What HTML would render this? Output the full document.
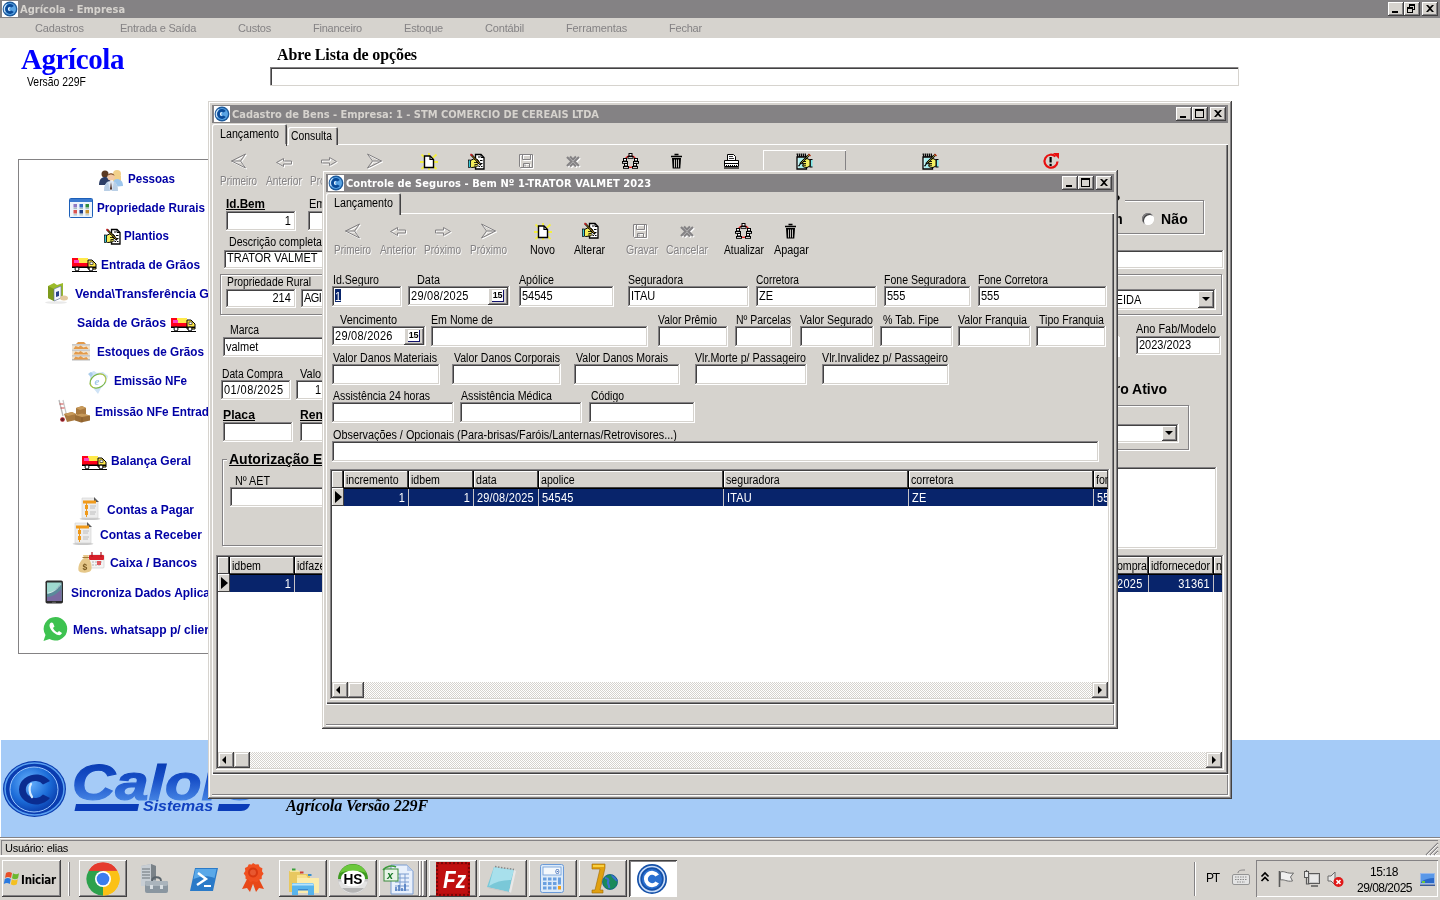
<!DOCTYPE html>
<html lang="pt-BR"><head><meta charset="utf-8"><title>Agrícola - Empresa</title>
<style>
*{box-sizing:border-box;margin:0;padding:0}
html,body{width:1440px;height:900px;overflow:hidden;background:#fff}
body{position:relative;font:11px "Liberation Sans",sans-serif;color:#000;-webkit-font-smoothing:none}
.a{position:absolute;white-space:pre}
.t{position:absolute;white-space:pre;line-height:13px;height:13px;font-size:12.5px;transform-origin:0 50%;transform:scaleX(.88)}
.s{display:inline-block;font-size:12.5px;transform-origin:0 50%;transform:scaleX(.88);white-space:pre}
.r>.s{transform-origin:100% 50%}
.tb{font:bold 11px "DejaVu Sans Condensed","Liberation Sans",sans-serif;color:#d6d3ce}
.face{background:#d6d3ce}
.win{position:absolute;background:#d6d3ce;box-shadow:inset -1px -1px #424142,inset 1px 1px #d6d3ce,inset -2px -2px #848284,inset 2px 2px #fff}
.cap{position:absolute;background:#848284}
.cbtn{position:absolute;width:16px;height:14px;background:#d6d3ce;box-shadow:inset -1px -1px #424142,inset 1px 1px #fff,inset -2px -2px #848284}
.ed{position:absolute;background:#fff;box-shadow:inset -1px -1px #fff,inset 1px 1px #848284,inset -2px -2px #d6d3ce,inset 2px 2px #424142;white-space:pre;line-height:13px;padding:4px 3px 0 3px;overflow:hidden}
.ed.r{text-align:right;padding-right:5px}
.btn{position:absolute;background:#d6d3ce;box-shadow:inset -1px -1px #424142,inset 1px 1px #fff,inset -2px -2px #848284}
.grp{position:absolute;border:1px solid #848284;box-shadow:inset 1px 1px #fff,1px 1px #fff}
.dis{color:#848284;text-shadow:1px 1px #fff}
.lm{position:absolute;white-space:pre;font:bold 12px "Liberation Sans",sans-serif;color:#0000a5;line-height:14px;letter-spacing:.35px}
.hc{position:absolute;background:#d6d3ce;box-shadow:inset -1px -1px #424142,inset 1px 1px #fff;white-space:pre;line-height:13px;padding:3px 0 0 2px;overflow:hidden;height:17px}
.hc .s{transform:scaleX(.85)}
.sc .s{letter-spacing:.2px}
.sc{position:absolute;background:#08246b;color:#fff;white-space:pre;line-height:13px;padding:3px 0 0 3px;overflow:hidden;height:17px;border-right:1px solid #c6c3c6}
.sc.r{text-align:right;padding-right:3px}
.sbar{position:absolute;height:16px;background-color:#e9e7e3;background-image:conic-gradient(#fff 25%,#d6d3ce 0 50%,#fff 0 75%,#d6d3ce 0);background-size:2px 2px}
.sbtn{position:absolute;width:16px;height:16px;background:#d6d3ce;box-shadow:inset -1px -1px #424142,inset 1px 1px #d6d3ce,inset -2px -2px #848284,inset 2px 2px #fff}
svg{position:absolute;overflow:visible}
</style></head>
<body>
<div id="root" style="position:absolute;left:0;top:0;width:1440px;height:900px;will-change:transform">
<div class="a" style="left:0px;top:0px;width:1440px;height:18px;background:#848284;"></div>
<svg style="left:2px;top:1px" width="16" height="16" viewBox="0 0 16 16"><rect x="0" y="0" width="16" height="16" fill="#fff"/><circle cx="8" cy="8" r="7.400" fill="#1c5a9c"/><circle cx="8" cy="8" r="6" fill="#5aa4e4"/><path d="M3.200 11.300a5.800 5.800 0 0 1 1.300-8a6.800 6.800 0 0 0-1.300 8z" fill="#e8f4ff" stroke="#e8f4ff" stroke-width=".7"/><path d="M11.86 4.98A4.9 4.9 0 1 0 11.86 11.02L9.46 9.51A2.1 2.1 0 1 1 9.46 6.49Z" fill="#0a4a98"/><path d="M7.200 6.700c-.9.800-.9 1.900 0 2.700" stroke="#e8f4ff" stroke-width="1.200" fill="none" stroke-linecap="round"/></svg>
<div class="t tb" style="left:20px;top:3px;;transform:none">Agrícola - Empresa</div>
<div class="cbtn" style="left:1388px;top:2px"><div class="a" style="left:4px;top:9px;width:6px;height:2px;background:#000"></div></div><div class="cbtn" style="left:1404px;top:2px"><div class="a" style="left:5px;top:2px;width:6px;height:6px;border:1px solid #000;border-top-width:2px"></div><div class="a" style="left:3px;top:5px;width:6px;height:6px;border:1px solid #000;border-top-width:2px;background:#d6d3ce"></div></div><div class="cbtn" style="left:1422px;top:2px"><svg style="left:4px;top:3px" width="8" height="7" viewBox="0 0 8 7"><path d="M0 0h2l2 2 2-2h2L5 3.5 8 7H6L4 5 2 7H0l3-3.5z" fill="#000"/></svg></div>
<div class="a" style="left:0px;top:18px;width:1440px;height:20px;background:#d6d3ce;"></div>
<div class="t " style="left:35px;top:22px;font:11px 'Liberation Sans',sans-serif;color:#848284;letter-spacing:-0.13px;transform:none">Cadastros</div>
<div class="t " style="left:120px;top:22px;font:11px 'Liberation Sans',sans-serif;color:#848284;letter-spacing:-0.23px;transform:none">Entrada e Saída</div>
<div class="t " style="left:238px;top:22px;font:11px 'Liberation Sans',sans-serif;color:#848284;letter-spacing:-0.21px;transform:none">Custos</div>
<div class="t " style="left:313px;top:22px;font:11px 'Liberation Sans',sans-serif;color:#848284;letter-spacing:-0.24px;transform:none">Financeiro</div>
<div class="t " style="left:404px;top:22px;font:11px 'Liberation Sans',sans-serif;color:#848284;letter-spacing:-0.20px;transform:none">Estoque</div>
<div class="t " style="left:485px;top:22px;font:11px 'Liberation Sans',sans-serif;color:#848284;letter-spacing:-0.17px;transform:none">Contábil</div>
<div class="t " style="left:566px;top:22px;font:11px 'Liberation Sans',sans-serif;color:#848284;letter-spacing:-0.12px;transform:none">Ferramentas</div>
<div class="t " style="left:669px;top:22px;font:11px 'Liberation Sans',sans-serif;color:#848284;letter-spacing:-0.21px;transform:none">Fechar</div>
<div class="a" style="left:0px;top:38px;width:1440px;height:702px;background:#ffffff;"></div>
<div class="a" style="left:0px;top:740px;width:1440px;height:97px;background:#a5cbf7;"></div>
<div class="a" style="left:0px;top:740px;width:1px;height:97px;background:#fff;"></div>
<div class="a" style="left:0px;top:837px;width:1440px;height:20px;background:#d6d3ce;"></div>
<div class="a" style="left:0px;top:837px;width:1440px;height:1px;background:#848284;"></div>
<div class="a" style="left:0px;top:838px;width:1440px;height:1px;background:#fff;"></div>
<div class="a" style="left:1px;top:840px;width:1437px;height:1px;background:#848284;"></div>
<div class="a" style="left:1px;top:840px;width:1px;height:15px;background:#848284;"></div>
<div class="t " style="left:5px;top:842px;font:11px 'Liberation Sans',sans-serif;letter-spacing:-0.26px;transform:none">Usuário: elias</div>
<div class="a" style="left:0px;top:855px;width:1440px;height:1px;background:#fff;"></div>
<div class="a" style="left:0px;top:856px;width:1440px;height:44px;background:#d6d3ce;"></div>
<div class="a" style="left:0px;top:856px;width:1440px;height:1px;background:#fff;"></div>
<div class="t " style="left:21px;top:44px;font:bold 29px 'Liberation Serif',serif;color:#0000ff;line-height:30px;height:30px;letter-spacing:-0.41px;transform:none">Agrícola</div>
<div class="t " style="left:27px;top:76px;;transform:scaleX(0.832)">Versão 229F</div>
<div class="t " style="left:277px;top:46px;font:bold 16px 'Liberation Serif',serif;line-height:18px;height:18px;letter-spacing:-0.12px;transform:none">Abre Lista de opções</div>
<div class="a" style="left:270px;top:67px;width:969px;height:19px;background:#fff;box-shadow:inset -1px -1px #d6d3ce,inset 1px 1px #848284,inset 2px 2px #424142"></div>
<div class="a" style="left:18px;top:159px;width:300px;height:495px;border:1px solid #848284;background:#fff"></div>
<svg style="left:99px;top:168px" width="25" height="23" viewBox="0 0 25 23"><circle cx="6" cy="6" r="3.5" fill="#5a3a22"/><path d="M0 17c0-6 3-8 6-8s6 2 6 8z" fill="#2c3e66"/><circle cx="18" cy="6" r="4" fill="#f1d08a"/><path d="M14 8c0 5 0 7-1 9h10c-1-2-1-4-1-9z" fill="#f1d08a"/><path d="M13 19c0-5 2-8 5-8s6 2 6 7z" fill="#9cc6ec"/><circle cx="12" cy="9" r="3.6" fill="#f3c9a5"/><path d="M8.5 8a3.6 3.6 0 0 1 7 0c-2-2-5-2-7 0z" fill="#7a4a22"/><path d="M5 23c0-7 3-10 7-10s7 3 7 10z" fill="#dfe9f5"/><path d="M12 14l-1 7 1 1 1-1z" fill="#4a2b20"/><path d="M5 23c0-5 1.5-8 4-9.5l2 9.500z M19 23c0-5-1.500-8-4-9.500l-2 9.500z" fill="#b9cfe6"/></svg>
<svg style="left:69px;top:198px" width="24" height="20" viewBox="0 0 24 20"><rect x=".5" y=".5" width="23" height="19" rx="1" fill="#eef4fb" stroke="#1c5fb8"/><rect x="1" y="1" width="22" height="3" fill="#3b7bd0"/><rect x="4.5" y="6" width="3.5" height="3.5" fill="#8e7cc3"/><rect x="4.5" y="12" width="3.5" height="3.5" fill="#d9534f"/><rect x="4.5" y="16.500" width="3.5" height=".8" fill="#8aa"/><rect x="4.5" y="10.300" width="3.5" height=".8" fill="#8aa"/><rect x="10.5" y="6" width="3.5" height="3.5" fill="#2e6bc6"/><rect x="10.5" y="12" width="3.5" height="3.5" fill="#1b3f8b"/><rect x="10.5" y="16.500" width="3.5" height=".8" fill="#8aa"/><rect x="10.5" y="10.300" width="3.5" height=".8" fill="#8aa"/><rect x="16.5" y="6" width="3.5" height="3.5" fill="#2e8b3e"/><rect x="16.5" y="12" width="3.5" height="3.5" fill="#c7922e"/><rect x="16.5" y="16.500" width="3.5" height=".8" fill="#8aa"/><rect x="16.5" y="10.300" width="3.5" height=".8" fill="#8aa"/></svg>
<svg style="left:104px;top:228px" width="17" height="17" viewBox="0 0 17 17"><path d="M7.500 1.500h5.500l3 3v11.500h-8.500z" fill="#fff" stroke="#000" stroke-width="1.300"/><path d="M13 1.500v3h3" fill="none" stroke="#000" stroke-width="1"/><path d="M10 4h2M12 7.500h2.500M10 10.500h1.500M13 10.500h1.500M10.500 13.500h1.500M13 13.500h1.500" stroke="#000" stroke-width="1"/><path d="M2.500 7.500l3-1.500 4 .5 1.500 2-2.500.5 2 1-1.500 1.500 1 1-1.500 1.500-5 .5-1.500-1.500z" fill="#f4ee5a" stroke="#000" stroke-width="1"/><path d="M6 9.500h3M6.500 11.500h3M6 13h2.500" stroke="#000" stroke-width=".8"/><rect x=".5" y="7" width="2" height="7.500" fill="#38c8d8" stroke="#000" stroke-width=".7"/><path d="M3 1.500l10 10.500" stroke="#000" stroke-width="2"/><path d="M2.500 1l2 2" stroke="#d02020" stroke-width="1.500"/><path d="M4.500 3l7.500 8" stroke="#c8a020" stroke-width=".8"/></svg>
<svg style="left:72px;top:257px" width="25" height="15" viewBox="0 0 25 15"><rect x="0" y="1" width="16" height="9" fill="#ff0018"/><rect x="6" y="1" width="10" height="5" fill="#ffe94a"/><rect x="2" y="3" width="5" height="3" fill="#ff40c0"/><path d="M16 3h4l4 4v5h-8z" fill="#ffe94a" stroke="#000" stroke-width="1"/><rect x="0" y="9.5" width="24" height="1.5" fill="#000"/><circle cx="5" cy="12" r="2" fill="#fff" stroke="#000"/><circle cx="19" cy="12" r="2" fill="#fff" stroke="#000"/><rect x="0" y="14" width="25" height="1" fill="#000"/><rect x="18" y="5" width="3" height="2.5" fill="#fff" stroke="#000" stroke-width=".6"/></svg>
<svg style="left:45px;top:281px" width="24" height="24" viewBox="0 0 24 24"><ellipse cx="11" cy="21.500" rx="11" ry="1.300" fill="#e9e9e9"/><path d="M3 5l6-3 3 2 6-2v14l-9 4-6-3z" fill="#9bbb2a"/><path d="M3 5l6 3v12l-6-3z" fill="#7d9a1c"/><path d="M9 8l7-3v12l-7 3z" fill="#f4f6fb" stroke="#5a6aa8" stroke-width=".6"/><path d="M11 11l3-1v5l-3 1z" fill="#27408b"/><ellipse cx="19" cy="17" rx="4" ry="2.500" fill="#e3c9a0"/></svg>
<svg style="left:171px;top:317px" width="25" height="15" viewBox="0 0 25 15"><rect x="0" y="1" width="16" height="9" fill="#ff0018"/><rect x="6" y="1" width="10" height="5" fill="#ffe94a"/><rect x="2" y="3" width="5" height="3" fill="#ff40c0"/><path d="M16 3h4l4 4v5h-8z" fill="#ffe94a" stroke="#000" stroke-width="1"/><rect x="0" y="9.5" width="24" height="1.5" fill="#000"/><circle cx="5" cy="12" r="2" fill="#fff" stroke="#000"/><circle cx="19" cy="12" r="2" fill="#fff" stroke="#000"/><rect x="0" y="14" width="25" height="1" fill="#000"/><rect x="18" y="5" width="3" height="2.5" fill="#fff" stroke="#000" stroke-width=".6"/></svg>
<svg style="left:72px;top:342px" width="18" height="19" viewBox="0 0 18 19"><rect x="0" y="2" width="18" height="16" fill="#f1e4cf"/><rect x="0" y="2" width="18" height="1.6" fill="#c9c9c9"/><rect x="0" y="7.5" width="18" height="1.6" fill="#c9c9c9"/><rect x="0" y="13" width="18" height="1.6" fill="#c9c9c9"/><rect x="0" y="17" width="18" height="1.500" fill="#b9b9b9"/><path d="M1.500 7.0l2-3 3 1 2-1.500 3 2 3-1 2 2.500z" fill="#e39a4a"/><path d="M1.500 12.5l2-3 3 1 2-1.500 3 2 3-1 2 2.500z" fill="#e39a4a"/><path d="M1.500 17.5l2-3 3 1 2-1.500 3 2 3-1 2 2.500z" fill="#e39a4a"/><path d="M4 2l2-2h6l2 2z" fill="#e39a4a"/></svg>
<svg style="left:86px;top:370px" width="24" height="25" viewBox="0 0 24 25"><path d="M3 3l5-2 3 2 6-1 5 4-2 7-5 5-3 6-4-5 2-5-5-3z" fill="#cfe3f6"/><path d="M2 4l3-2 2 2-2 3z" fill="#a9cbe9"/><ellipse cx="12" cy="11" rx="8.500" ry="6.500" transform="rotate(-35 12 11)" fill="#fff" stroke="#7ab648" stroke-width="1.200"/><ellipse cx="12" cy="11" rx="8.500" ry="6.500" transform="rotate(-35 12 11)" fill="none" stroke="#f0d34a" stroke-width=".5" stroke-dasharray="6 14"/><text x="8.500" y="15" font-family="Liberation Serif,serif" font-style="italic" font-weight="bold" font-size="11" fill="#9fc6ea">e</text></svg>
<svg style="left:58px;top:400px" width="33" height="23" viewBox="0 0 33 23"><path d="M1 0l4 16" stroke="#b8b8b8" stroke-width="1.300"/><path d="M5 0l3.500 15" stroke="#c8c8c8" stroke-width="1.200"/><path d="M1.500 4h4M2.500 8h4" stroke="#c02020" stroke-width=".8"/><circle cx="4.500" cy="19.500" r="2.300" fill="#a01822"/><circle cx="4.500" cy="19.500" r=".9" fill="#333"/><path d="M6 14l8-2 4 2v6l-9 2z" fill="#a9793f"/><path d="M6 14l8-2 4 2-8 2z" fill="#c89a5a"/><path d="M18 8l6-2 4 2v6l-7 2-3-2z" fill="#a9793f"/><path d="M18 8l6-2 4 2-6 2z" fill="#c89a5a"/><path d="M17 15l7-1.500 8 2v5l-9 2-6-2z" fill="#9a6c35"/><path d="M17 15l7-1.500 8 2-8 1.500z" fill="#c89a5a"/><path d="M24 17.500v5" stroke="#7a5326" stroke-width=".6"/></svg>
<svg style="left:82px;top:455px" width="25" height="15" viewBox="0 0 25 15"><rect x="0" y="1" width="16" height="9" fill="#ff0018"/><rect x="6" y="1" width="10" height="5" fill="#ffe94a"/><rect x="2" y="3" width="5" height="3" fill="#ff40c0"/><path d="M16 3h4l4 4v5h-8z" fill="#ffe94a" stroke="#000" stroke-width="1"/><rect x="0" y="9.5" width="24" height="1.5" fill="#000"/><circle cx="5" cy="12" r="2" fill="#fff" stroke="#000"/><circle cx="19" cy="12" r="2" fill="#fff" stroke="#000"/><rect x="0" y="14" width="25" height="1" fill="#000"/><rect x="18" y="5" width="3" height="2.5" fill="#fff" stroke="#000" stroke-width=".6"/></svg>
<svg style="left:80px;top:497px" width="21" height="23" viewBox="0 0 21 23"><ellipse cx="10" cy="21.800" rx="10.500" ry="1.200" fill="#c9c9c9"/><path d="M2 1h12l4 4v16H2z" fill="#ededed" stroke="#d0d0d0" stroke-width=".6"/><path d="M14 0l5 5h-5z" fill="#5a5a5a"/><rect x="3" y="3.500" width="13" height="3" fill="#f09a1a"/><rect x="5" y="8" width="3" height="4" fill="#f09a1a"/><rect x="5" y="14" width="3" height="4" fill="#f09a1a"/><rect x="6" y="6" width="1" height="14" fill="#f09a1a"/><path d="M10 9h6M10 11h5M10 15h6M10 17h5" stroke="#b9b9b9" stroke-width=".9"/></svg>
<svg style="left:73px;top:522px" width="21" height="23" viewBox="0 0 21 23"><ellipse cx="10" cy="21.800" rx="10.500" ry="1.200" fill="#c9c9c9"/><path d="M2 1h12l4 4v16H2z" fill="#ededed" stroke="#d0d0d0" stroke-width=".6"/><path d="M14 0l5 5h-5z" fill="#5a5a5a"/><rect x="3" y="3.500" width="13" height="3" fill="#f09a1a"/><rect x="5" y="8" width="3" height="4" fill="#f09a1a"/><rect x="5" y="14" width="3" height="4" fill="#f09a1a"/><rect x="6" y="6" width="1" height="14" fill="#f09a1a"/><path d="M10 9h6M10 11h5M10 15h6M10 17h5" stroke="#b9b9b9" stroke-width=".9"/></svg>
<svg style="left:78px;top:551px" width="27" height="22" viewBox="0 0 27 22"><rect x="11" y="4" width="15" height="13" rx="1" fill="#f4f4f4" stroke="#c8c8c8" stroke-width=".6"/><rect x="11" y="4" width="15" height="5" rx="1" fill="#d8202a"/><path d="M14 1v5M23 1v5" stroke="#b01820" stroke-width="1.200"/><path d="M14 11h10M14 14h8" stroke="#c9c9c9" stroke-width="1.400" stroke-dasharray="2 1"/><rect x="19" y="10" width="4" height="4" fill="#e0565c"/><path d="M5 4h6l-1.500 3c3 2 4.500 6 4 11-.500 2.500-2 3-5 3.500-3.500.500-7 0-8-2-.700-5 2-10 5.500-12.500z" fill="#e6c88a"/><path d="M4.500 6.500h6.500" stroke="#a67a3a" stroke-width="1"/><text x="4.500" y="18.500" font-family="Liberation Sans,sans-serif" font-weight="bold" font-size="8.500" fill="#7a5a20">$</text></svg>
<svg style="left:45px;top:580px" width="19" height="24" viewBox="0 0 19 24"><rect x=".5" y=".5" width="17.500" height="23" rx="1.800" fill="#2b2b2b"/><rect x="2" y="2.500" width="14.500" height="18.500" fill="#9fd9cf"/><path d="M2 14c5-1 9-4 14.500-11.500v18.500H2z" fill="#5a8a9a"/><path d="M2 17c5 0 10-3 14.500-8v12H2z" fill="#7a6aa0"/><path d="M3 13c5-.5 9-3.500 13-9" stroke="#fff" stroke-width=".6" fill="none"/><rect x="7" y="21.800" width="4" height="1" rx=".5" fill="#666"/></svg>
<svg style="left:43px;top:617px" width="25" height="24" viewBox="0 0 25 24"><path d="M12.500 0a11.800 11.800 0 1 1-6 22l-6 2 2-6a11.800 11.800 0 0 1 10-18z" fill="#3ec250"/><path d="M8.500 5.500c-.8 0-2 1-2 3 0 3.500 4.500 8.500 8.500 9.500 2 .5 3.500-.5 4-2l-3-2-1.500 1.500c-2-1-3.500-2.500-4.500-4.500l1.500-1.500-1.500-3.500z" fill="#fff"/></svg>
<div class="t " style="left:128px;top:173px;font-weight:bold;color:#0000a5;transform:scaleX(0.926)">Pessoas</div>
<div class="t " style="left:97px;top:202px;font-weight:bold;color:#0000a5;transform:scaleX(0.936)">Propriedade Rurais</div>
<div class="t " style="left:124px;top:230px;font-weight:bold;color:#0000a5;transform:scaleX(0.925)">Plantios</div>
<div class="t " style="left:101px;top:259px;font-weight:bold;color:#0000a5;transform:scaleX(0.950)">Entrada de Grãos</div>
<div class="t " style="left:75px;top:288px;font-weight:bold;color:#0000a5;transform:scaleX(0.994)">Venda\Transferência G</div>
<div class="t " style="left:77px;top:317px;font-weight:bold;color:#0000a5;transform:scaleX(0.978)">Saída de Grãos</div>
<div class="t " style="left:97px;top:346px;font-weight:bold;color:#0000a5;transform:scaleX(0.939)">Estoques de Grãos</div>
<div class="t " style="left:114px;top:375px;font-weight:bold;color:#0000a5;transform:scaleX(0.930)">Emissão NFe</div>
<div class="t " style="left:95px;top:406px;font-weight:bold;color:#0000a5;transform:scaleX(0.938)">Emissão NFe Entrad</div>
<div class="t " style="left:111px;top:455px;font-weight:bold;color:#0000a5;transform:scaleX(0.959)">Balança Geral</div>
<div class="t " style="left:107px;top:504px;font-weight:bold;color:#0000a5;transform:scaleX(0.956)">Contas a Pagar</div>
<div class="t " style="left:100px;top:529px;font-weight:bold;color:#0000a5;transform:scaleX(0.966)">Contas a Receber</div>
<div class="t " style="left:110px;top:557px;font-weight:bold;color:#0000a5;transform:scaleX(0.978)">Caixa / Bancos</div>
<div class="t " style="left:71px;top:587px;font-weight:bold;color:#0000a5;transform:scaleX(0.956)">Sincroniza Dados Aplica</div>
<div class="t " style="left:73px;top:624px;font-weight:bold;color:#0000a5;transform:scaleX(0.969)">Mens. whatsapp p/ clier</div>
<svg style="left:0;top:755px;z-index:0" width="260" height="70" viewBox="0 755 260 70"><defs><linearGradient id="lg1" x1="0" y1="0" x2="0" y2="1"><stop offset="0" stop-color="#0030a8"/><stop offset=".45" stop-color="#1850c8"/><stop offset="1" stop-color="#5a9cf0"/></linearGradient><radialGradient id="rg1" cx=".4" cy=".35" r=".7"><stop offset="0" stop-color="#6ab4ff"/><stop offset=".6" stop-color="#1c6cd8"/><stop offset="1" stop-color="#0838a8"/></radialGradient></defs><ellipse cx="34.500" cy="789" rx="31.500" ry="28" fill="#0a3cb0"/><ellipse cx="34.500" cy="789" rx="29.500" ry="26" fill="none" stroke="#5aa0f0" stroke-width="1.500"/><ellipse cx="34" cy="789.500" rx="24" ry="22.500" fill="url(#rg1)"/><ellipse cx="34" cy="789.500" rx="24" ry="22.500" fill="none" stroke="#9cc8ff" stroke-width="1"/><path d="M50 781a17 15 0 1 0 0 17l-7-3.500a9.500 8.500 0 1 1 0-10z" fill="#0a2c90"/><path d="M31 784c-2 3-2 9 1 13" stroke="#d8ecff" stroke-width="2.200" fill="none" stroke-linecap="round"/><text x="72" y="799.500" font-family="Liberation Sans,sans-serif" font-weight="bold" font-style="italic" font-size="50" textLength="186" lengthAdjust="spacingAndGlyphs" fill="url(#lg1)" stroke="url(#lg1)" stroke-width="1.200">Calors</text><path d="M76 804h63l-1.500 7H74.500z" fill="#0a3cb8"/><path d="M219 804h31c-1 4-4 7-9 7h-23.500z" fill="#0a3cb8"/><text x="143" y="810.500" font-family="Liberation Sans,sans-serif" font-weight="bold" font-style="italic" font-size="14" textLength="70" lengthAdjust="spacingAndGlyphs" fill="#1040c0">Sistemas</text></svg>
<div class="win" style="left:208px;top:101px;width:1024px;height:698px"></div>
<div class="a" style="left:212px;top:105px;width:1016px;height:18px;background:#848284;"></div>
<svg style="left:214px;top:106px" width="16" height="16" viewBox="0 0 16 16"><rect x="0" y="0" width="16" height="16" fill="#fff"/><circle cx="8" cy="8" r="7.400" fill="#1c5a9c"/><circle cx="8" cy="8" r="6" fill="#5aa4e4"/><path d="M3.200 11.300a5.800 5.800 0 0 1 1.300-8a6.800 6.800 0 0 0-1.300 8z" fill="#e8f4ff" stroke="#e8f4ff" stroke-width=".7"/><path d="M11.86 4.98A4.9 4.9 0 1 0 11.86 11.02L9.46 9.51A2.1 2.1 0 1 1 9.46 6.49Z" fill="#0a4a98"/><path d="M7.200 6.700c-.9.800-.9 1.900 0 2.700" stroke="#e8f4ff" stroke-width="1.200" fill="none" stroke-linecap="round"/></svg>
<div class="t tb" style="left:232px;top:108px;;letter-spacing:-0.02px;transform:none">Cadastro de Bens - Empresa: 1 - STM COMERCIO DE CEREAIS LTDA</div>
<div class="cbtn" style="left:1176px;top:107px"><div class="a" style="left:4px;top:9px;width:6px;height:2px;background:#000"></div></div><div class="cbtn" style="left:1192px;top:107px"><div class="a" style="left:3px;top:2px;width:9px;height:9px;border:1px solid #000;border-top-width:2px"></div></div><div class="cbtn" style="left:1210px;top:107px"><svg style="left:4px;top:3px" width="8" height="7" viewBox="0 0 8 7"><path d="M0 0h2l2 2 2-2h2L5 3.5 8 7H6L4 5 2 7H0l3-3.5z" fill="#000"/></svg></div>
<div class="a" style="left:212px;top:144px;width:1016px;height:630px;background:#d6d3ce;box-shadow:inset 1px 1px #fff,inset -1px -1px #424142,inset -2px -2px #848284"></div>
<div class="a" style="left:212px;top:774px;width:1017px;height:22px;background:#fff;"></div>
<div class="a" style="left:212px;top:774px;width:1016px;height:21px;background:#d6d3ce;box-shadow:inset 0 1px #fff,inset -1px -1px #848284"></div>
<div class="a" style="left:288px;top:127px;width:50px;height:18px;background:#d6d3ce;border-radius:2px 2px 0 0;box-shadow:inset 1px 1px #fff,inset -1px 0 #424142,inset -2px 0 #848284"></div>
<div class="t " style="left:291px;top:130px;;transform:scaleX(0.831)">Consulta</div>
<div class="a" style="left:212px;top:124px;width:75px;height:22px;background:#d6d3ce;border-radius:2px 2px 0 0;box-shadow:inset 1px 1px #fff,inset -1px 0 #424142,inset -2px 0 #848284"></div>
<div class="t " style="left:220px;top:128px;;transform:scaleX(0.857)">Lançamento</div>
<div class="a" style="left:213px;top:144px;width:73px;height:2px;background:#d6d3ce;"></div>
<svg style="left:230px;top:153px" width="17" height="16" viewBox="0 0 17 16"><g transform="translate(1,1)" stroke="#fff" fill="none"><path d="M15.500 1L1.500 8l14 7-5-7z M1.500 8h9" stroke-width="1"/></g><g stroke="#848284" fill="none"><path d="M15.500 1L1.500 8l14 7-5-7z M1.500 8h9" stroke-width="1"/></g></svg>
<svg style="left:276px;top:157px" width="17" height="11" viewBox="0 0 17 11"><g transform="translate(1,1)" stroke="#fff" fill="none"><path d="M.5 5.500L7.500 1.500v2.500h8v3h-8v2.500z" stroke-width="1"/></g><g stroke="#848284" fill="none"><path d="M.5 5.500L7.500 1.500v2.500h8v3h-8v2.500z" stroke-width="1"/></g></svg>
<svg style="left:321px;top:156px" width="17" height="11" viewBox="0 0 17 11"><g transform="translate(1,1)" stroke="#fff" fill="none"><path d="M15.500 5.500L8.500 1.500v2.500h-8v3h8v2.500z" stroke-width="1"/></g><g stroke="#848284" fill="none"><path d="M15.500 5.500L8.500 1.500v2.500h-8v3h8v2.500z" stroke-width="1"/></g></svg>
<svg style="left:366px;top:153px" width="17" height="16" viewBox="0 0 17 16"><g transform="translate(1,1)" stroke="#fff" fill="none"><path d="M1.500 1l14 7-14 7 5-7z M15.500 8h-9" stroke-width="1"/></g><g stroke="#848284" fill="none"><path d="M1.500 1l14 7-14 7 5-7z M15.500 8h-9" stroke-width="1"/></g></svg>
<svg style="left:420px;top:153px" width="18" height="17" viewBox="0 0 18 17"><path d="M1.500 1.500l4 3.500M16.500 1.500l-4 3.500M0 9h4M14 9h4M1.500 16l3.500-3M16.500 16l-3.500-3M9 0v3M9 14.500v2.500" stroke="#f4f040" stroke-width="1.800"/><path d="M4.500 3h5.500l3.500 3.500v8h-9z" fill="#fff" stroke="#000" stroke-width="1.400"/><path d="M10 3v3.500h3.500" fill="none" stroke="#000" stroke-width="1.200"/></svg>
<svg style="left:468px;top:153px" width="17" height="17" viewBox="0 0 17 17"><path d="M7.500 1.500h5.500l3 3v11.500h-8.500z" fill="#fff" stroke="#000" stroke-width="1.300"/><path d="M13 1.500v3h3" fill="none" stroke="#000" stroke-width="1"/><path d="M10 4h2M12 7.500h2.500M10 10.500h1.500M13 10.500h1.500M10.500 13.500h1.500M13 13.500h1.500" stroke="#000" stroke-width="1"/><path d="M2.500 7.500l3-1.500 4 .5 1.500 2-2.500.5 2 1-1.500 1.500 1 1-1.500 1.500-5 .5-1.500-1.500z" fill="#f4ee5a" stroke="#000" stroke-width="1"/><path d="M6 9.500h3M6.500 11.500h3M6 13h2.500" stroke="#000" stroke-width=".8"/><rect x=".5" y="7" width="2" height="7.500" fill="#38c8d8" stroke="#000" stroke-width=".7"/><path d="M3 1.500l10 10.500" stroke="#000" stroke-width="2"/><path d="M2.500 1l2 2" stroke="#d02020" stroke-width="1.500"/><path d="M4.500 3l7.500 8" stroke="#c8a020" stroke-width=".8"/></svg>
<svg style="left:518px;top:153px" width="17" height="16" viewBox="0 0 17 16"><g transform="translate(1,1)" stroke="#fff" fill="none"><path d="M1.500 1.500h13v13h-12l-1-1z M4.500 1.500v5h8v-5 M5.500 14.500v-4h6v4 M7 11.500v2" stroke-width="1"/></g><g stroke="#848284" fill="none"><path d="M1.500 1.500h13v13h-12l-1-1z M4.500 1.500v5h8v-5 M5.500 14.500v-4h6v4 M7 11.500v2" stroke-width="1"/></g></svg>
<svg style="left:566px;top:156px" width="14" height="12" viewBox="0 0 14 12"><g transform="translate(1,1)"><path d="M1 1l4.500 4.500L1 10M13 1L8.500 5.500 13 10M4 .5l3 3 3-3M4 10.500l3-3 3 3" stroke="#fff" stroke-width="2.200" fill="none"/></g><path d="M1 1l4.500 4.500L1 10M13 1L8.500 5.500 13 10M4 .5l3 3 3-3M4 10.500l3-3 3 3" stroke="#848284" stroke-width="2.200" fill="none"/></svg>
<svg style="left:622px;top:153px" width="17" height="16" viewBox="0 0 17 16"><circle cx="8.500" cy="8.500" r="5.800" fill="none" stroke="#e81010" stroke-width="1.300"/><rect x="7.0" y="0.5" width="3" height="2.500" fill="#fff" stroke="#000" stroke-width="1"/><rect x="6.0" y="3.5" width="5" height="1.800" fill="#fff" stroke="#000" stroke-width="1"/><rect x="1.5" y="5.5" width="3" height="2.500" fill="#fff" stroke="#000" stroke-width="1"/><rect x="0.5" y="8.5" width="5" height="1.800" fill="#fff" stroke="#000" stroke-width="1"/><rect x="12.5" y="5.5" width="3" height="2.500" fill="#fff" stroke="#000" stroke-width="1"/><rect x="11.5" y="8.5" width="5" height="1.800" fill="#fff" stroke="#000" stroke-width="1"/><rect x="2.5" y="10.5" width="3" height="2.500" fill="#fff" stroke="#000" stroke-width="1"/><rect x="1.5" y="13.5" width="5" height="1.800" fill="#fff" stroke="#000" stroke-width="1"/><rect x="11.5" y="10.5" width="3" height="2.500" fill="#fff" stroke="#000" stroke-width="1"/><rect x="10.5" y="13.5" width="5" height="1.800" fill="#fff" stroke="#000" stroke-width="1"/></svg>
<svg style="left:670px;top:153px" width="13" height="16" viewBox="0 0 13 16"><path d="M4.500 1.500h4M1 3.500h11" stroke="#000" stroke-width="1.600" fill="none"/><path d="M2 5h9l-.7 10.500H2.700z" fill="#000"/><path d="M4.500 6.500v8M6.500 6.500v8M8.500 6.500v8" stroke="#d6d3ce" stroke-width=".9"/></svg>
<svg style="left:723px;top:153px" width="17" height="16" viewBox="0 0 17 16"><path d="M4.500 7V1.500h6l2 2V7" fill="#fff" stroke="#000"/><path d="M6 3.500h4M6 5.500h5" stroke="#000" stroke-width=".8"/><path d="M1.500 7.500h14v6h-14z" fill="#fff" stroke="#000"/><path d="M1.500 10.500h14" stroke="#000"/><path d="M3 12.500h11" stroke="#000" stroke-width="1" stroke-dasharray="1 1"/><path d="M1 15h15" stroke="#000" stroke-width="1.200"/></svg>
<div class="a" style="left:763px;top:150px;width:83px;height:22px;box-shadow:inset 1px 1px #fff,inset -1px -1px #848284"></div>
<svg style="left:796px;top:153px" width="17" height="17" viewBox="0 0 17 17"><path d="M1 4h9.500v12H1z" fill="#e8fcfc" stroke="#000" stroke-width="1.300"/><path d="M2.500 6h6M2.500 8h4M2.500 10h3M2.500 12h4M2.500 14h6" stroke="#6ae0e0" stroke-width="1"/><path d="M1 .5l1 3.500M3 .5l1 3.500M5 .5l1 3.500M7 .5l1 3.500M9 .5l1 3.500" stroke="#000" stroke-width="1.200"/><rect x="14.300" y="6.500" width="2.200" height="7.500" fill="#7ae8e8"/><path d="M13.500 6.500h3M13.500 14h3M14.200 6.500v7.500" stroke="#000" stroke-width="1"/><path d="M8 6.500l3-1 3 1.500v6l-3 1.500-3.500-.5-1-1.500 1-.8-1.500-1 1-1-1.500-1 1-1.200z" fill="#f4f060" stroke="#000" stroke-width="1"/><path d="M6.500 8.500h3.500M6.500 10.500h3.500M7 12.200h3" stroke="#000" stroke-width=".9"/><path d="M13.500 1.500L4 11" stroke="#000" stroke-width="2"/><path d="M13 2L5 10" stroke="#f4f060" stroke-width=".9" stroke-dasharray="1 .8"/><path d="M12.500 1l2 2" stroke="#b03010" stroke-width="1.400"/><path d="M4.500 10.500l-2 2.500 1.500-.5" stroke="#000" stroke-width="1" fill="none"/></svg>
<svg style="left:922px;top:153px" width="17" height="17" viewBox="0 0 17 17"><path d="M1 4h9.500v12H1z" fill="#e8fcfc" stroke="#000" stroke-width="1.300"/><path d="M2.500 6h6M2.500 8h4M2.500 10h3M2.500 12h4M2.500 14h6" stroke="#6ae0e0" stroke-width="1"/><path d="M1 .5l1 3.500M3 .5l1 3.500M5 .5l1 3.500M7 .5l1 3.500M9 .5l1 3.500" stroke="#000" stroke-width="1.200"/><rect x="14.300" y="6.500" width="2.200" height="7.500" fill="#7ae8e8"/><path d="M13.500 6.500h3M13.500 14h3M14.200 6.500v7.500" stroke="#000" stroke-width="1"/><path d="M8 6.500l3-1 3 1.500v6l-3 1.500-3.500-.5-1-1.500 1-.8-1.500-1 1-1-1.500-1 1-1.200z" fill="#f4f060" stroke="#000" stroke-width="1"/><path d="M6.500 8.500h3.500M6.500 10.500h3.500M7 12.200h3" stroke="#000" stroke-width=".9"/><path d="M13.500 1.500L4 11" stroke="#000" stroke-width="2"/><path d="M13 2L5 10" stroke="#f4f060" stroke-width=".9" stroke-dasharray="1 .8"/><path d="M12.500 1l2 2" stroke="#b03010" stroke-width="1.400"/><path d="M4.500 10.500l-2 2.500 1.500-.5" stroke="#000" stroke-width="1" fill="none"/></svg>
<svg style="left:1042px;top:153px" width="17" height="17" viewBox="0 0 17 17"><path d="M13.500 3.500a6.500 6.500 0 1 0 2 5" fill="none" stroke="#e81010" stroke-width="2.200"/><path d="M11 0h6v6z" fill="#e81010"/><rect x="7.500" y="4" width="2.200" height="5.500" fill="#000"/><rect x="7.500" y="10.800" width="2.200" height="2.200" fill="#000"/></svg>
<div class="t dis" style="left:220px;top:175px;;transform:scaleX(0.795)">Primeiro</div>
<div class="t dis" style="left:266px;top:175px;;transform:scaleX(0.822)">Anterior</div>
<div class="t dis" style="left:310px;top:175px;;transform:scaleX(0.807)">Próximo</div>
<div class="t " style="left:226px;top:198px;font-weight:bold;transform:scaleX(0.936)"><u>Id.Bem</u></div>
<div class="ed r" style="left:226px;top:211px;width:70px;height:20px;padding-top:4px"><span class="s">1</span></div>
<div class="t " style="left:309px;top:198px;">Empresa</div>
<div class="ed " style="left:308px;top:211px;width:60px;height:20px;"></div>
<div class="t " style="left:229px;top:236px;;transform:scaleX(0.847)">Descrição completa</div>
<div class="ed " style="left:224px;top:250px;width:1000px;height:19px;padding:2px 0 0 3px"><span class="s">TRATOR VALMET</span></div>
<div class="grp" style="left:220px;top:274px;width:1002px;height:41px"></div>
<div class="t " style="left:227px;top:276px;;transform:scaleX(0.828)">Propriedade Rural</div>
<div class="ed r" style="left:226px;top:289px;width:70px;height:19px;padding-top:3px"><span class="s">214</span></div>
<div class="ed " style="left:301px;top:289px;width:915px;height:19px;padding-top:3px;letter-spacing:-.6px"><span class="s">AGI</span></div>
<div class="t " style="left:230px;top:324px;;transform:scaleX(0.835)">Marca</div>
<div class="ed " style="left:223px;top:337px;width:897px;height:20px;padding-top:4px"><span class="s">valmet</span></div>
<div class="t " style="left:222px;top:368px;;transform:scaleX(0.821)">Data Compra</div>
<div class="ed " style="left:221px;top:380px;width:70px;height:20px;padding:4px 0 0 3px;letter-spacing:.5px"><span class="s">01/08/2025</span></div>
<div class="t " style="left:300px;top:368px;">Valor</div>
<div class="ed " style="left:296px;top:380px;width:80px;height:20px;padding:4px 0 0 19px"><span class="s">1.</span></div>
<div class="t " style="left:223px;top:409px;font-weight:bold;transform:scaleX(0.979)"><u>Placa</u></div>
<div class="t " style="left:300px;top:409px;font-weight:bold;transform:scaleX(0.971)"><u>Renavam</u></div>
<div class="ed " style="left:223px;top:422px;width:70px;height:20px;"></div>
<div class="ed " style="left:300px;top:422px;width:80px;height:20px;"></div>
<div class="grp" style="left:222px;top:459px;width:880px;height:87px"></div>
<div class="a" style="left:227px;top:452px;width:120px;height:14px;background:#d6d3ce;"></div>
<div class="t " style="left:229px;top:451px;font:bold 14px 'Liberation Sans',sans-serif;line-height:16px;height:16px;transform:none"><u>Autorização Especial</u></div>
<div class="t " style="left:235px;top:475px;;transform:scaleX(0.860)">Nº AET</div>
<div class="ed " style="left:230px;top:487px;width:200px;height:20px;"></div>
<div class="grp" style="left:1000px;top:200px;width:204px;height:34px"></div>
<div class="a" style="left:1075px;top:193px;width:50px;height:14px;background:#d6d3ce;"></div>
<div class="t " style="left:1077px;top:192px;font:bold 14px 'Liberation Sans',sans-serif;line-height:16px;height:16px;transform:none">Ativo?</div>
<div class="t " style="left:1097px;top:211px;font:bold 14px 'Liberation Sans',sans-serif;line-height:16px;height:16px;transform:none">Sim</div>
<div class="a" style="left:1142px;top:213px;width:12px;height:12px;border-radius:50%;background:#fff;box-shadow:inset 1px 1px #848284,inset -1px -1px #fff,inset 2px 2px #424142"></div>
<div class="t " style="left:1161px;top:211px;font:bold 14px 'Liberation Sans',sans-serif;line-height:16px;height:16px;letter-spacing:0.18px;transform:none">Não</div>
<div class="ed " style="left:1000px;top:289px;width:216px;height:21px;padding:5px 0 0 93px"><span class="s">ALMEIDA</span></div>
<div class="btn" style="left:1198px;top:291px;width:16px;height:17px"><div class="a" style="left:4px;top:6px;border:4px solid transparent;border-top-color:#000;border-bottom:0"></div></div>
<div class="ed " style="left:1000px;top:336px;width:119px;height:20px;"></div>
<div class="t " style="left:1136px;top:323px;;transform:scaleX(0.872)">Ano Fab/Modelo</div>
<div class="ed " style="left:1136px;top:336px;width:85px;height:19px;padding-top:3px"><span class="s">2023/2023</span></div>
<div class="t " style="left:1068px;top:381px;font:bold 14px 'Liberation Sans',sans-serif;line-height:16px;height:16px;transform:none">Cadastro Ativo</div>
<div class="grp" style="left:1000px;top:405px;width:189px;height:45px"></div>
<div class="ed " style="left:1000px;top:424px;width:179px;height:19px;"></div>
<div class="btn" style="left:1162px;top:426px;width:15px;height:15px"><div class="a" style="left:3px;top:5px;border:4px solid transparent;border-top-color:#000;border-bottom:0"></div></div>
<div class="ed " style="left:1000px;top:467px;width:217px;height:82px;"></div>
<div class="ed " style="left:216px;top:555px;width:1008px;height:215px;"></div>
<div class="a" style="left:218px;top:557px;width:1004px;height:18px;background:#000;"></div>
<div class="hc" style="left:218px;top:557px;width:11px"><span class="s"></span></div>
<div class="hc" style="left:230px;top:557px;width:64px"><span class="s">idbem</span></div>
<div class="hc" style="left:295px;top:557px;width:60px"><span class="s">idfazenda</span></div>
<div class="hc" style="left:1100px;top:557px;width:48px"><span class="s" style="position:absolute;right:1px;top:3px;transform-origin:100% 50%">datacompra</span></div>
<div class="hc" style="left:1149px;top:557px;width:64px"><span class="s">idfornecedor</span></div>
<div class="hc" style="left:1214px;top:557px;width:8px"><span class="s">n</span></div>
<div class="a" style="left:218px;top:575px;width:1004px;height:17px;background:#08246b;"></div>
<div class="hc" style="left:218px;top:574px;width:12px;height:18px"><div class="a" style="left:3px;top:3px;border:6px solid transparent;border-left:7px solid #000;border-right:0"></div></div>
<div class="sc r" style="left:230px;top:575px;width:65px"><span class="s">1</span></div>
<div class="sc" style="left:295px;top:575px;width:60px"><span class="s"></span></div>
<div class="sc" style="left:1100px;top:575px;width:49px"><span class="s" style="position:absolute;right:5px;top:3px;transform-origin:100% 50%;letter-spacing:.3px">01/08/2025</span></div>
<div class="sc r" style="left:1149px;top:575px;width:65px"><span class="s">31361</span></div>
<div class="sbar" style="left:218px;top:752px;width:1004px"></div>
<div class="sbtn" style="left:218px;top:752px"><div class="a" style="left:4px;top:4px;border:4px solid transparent;border-right:4px solid #000;border-left:0"></div></div>
<div class="sbtn" style="left:234px;top:752px"></div>
<div class="sbtn" style="left:1206px;top:752px"><div class="a" style="left:6px;top:4px;border:4px solid transparent;border-left:4px solid #000;border-right:0"></div></div>
<div class="win" style="left:322px;top:170px;width:796px;height:559px"></div>
<div class="a" style="left:326px;top:174px;width:788px;height:18px;background:#848284;"></div>
<svg style="left:328px;top:175px" width="16" height="16" viewBox="0 0 16 16"><rect x="0" y="0" width="16" height="16" fill="#fff"/><circle cx="8" cy="8" r="7.400" fill="#1c5a9c"/><circle cx="8" cy="8" r="6" fill="#5aa4e4"/><path d="M3.200 11.300a5.800 5.800 0 0 1 1.300-8a6.800 6.800 0 0 0-1.300 8z" fill="#e8f4ff" stroke="#e8f4ff" stroke-width=".7"/><path d="M11.86 4.98A4.9 4.9 0 1 0 11.86 11.02L9.46 9.51A2.1 2.1 0 1 1 9.46 6.49Z" fill="#0a4a98"/><path d="M7.200 6.700c-.9.800-.9 1.900 0 2.700" stroke="#e8f4ff" stroke-width="1.200" fill="none" stroke-linecap="round"/></svg>
<div class="t tb" style="left:346px;top:177px;color:#fff;letter-spacing:0.06px;transform:none">Controle de Seguros - Bem Nº 1-TRATOR VALMET 2023</div>
<div class="cbtn" style="left:1062px;top:176px"><div class="a" style="left:4px;top:9px;width:6px;height:2px;background:#000"></div></div><div class="cbtn" style="left:1078px;top:176px"><div class="a" style="left:3px;top:2px;width:9px;height:9px;border:1px solid #000;border-top-width:2px"></div></div><div class="cbtn" style="left:1096px;top:176px"><svg style="left:4px;top:3px" width="8" height="7" viewBox="0 0 8 7"><path d="M0 0h2l2 2 2-2h2L5 3.5 8 7H6L4 5 2 7H0l3-3.5z" fill="#000"/></svg></div>
<div class="a" style="left:326px;top:213px;width:788px;height:491px;background:#d6d3ce;box-shadow:inset 1px 1px #fff,inset -1px -1px #424142,inset -2px -2px #848284"></div>
<div class="a" style="left:326px;top:704px;width:789px;height:22px;background:#fff;"></div>
<div class="a" style="left:326px;top:704px;width:788px;height:21px;background:#d6d3ce;box-shadow:inset 0 1px #fff,inset -1px -1px #848284"></div>
<div class="a" style="left:326px;top:193px;width:75px;height:22px;background:#d6d3ce;border-radius:2px 2px 0 0;box-shadow:inset 1px 1px #fff,inset -1px 0 #424142,inset -2px 0 #848284"></div>
<div class="t " style="left:334px;top:197px;;transform:scaleX(0.857)">Lançamento</div>
<div class="a" style="left:327px;top:213px;width:72px;height:2px;background:#d6d3ce;"></div>
<svg style="left:344px;top:223px" width="17" height="16" viewBox="0 0 17 16"><g transform="translate(1,1)" stroke="#fff" fill="none"><path d="M15.500 1L1.500 8l14 7-5-7z M1.500 8h9" stroke-width="1"/></g><g stroke="#848284" fill="none"><path d="M15.500 1L1.500 8l14 7-5-7z M1.500 8h9" stroke-width="1"/></g></svg>
<svg style="left:390px;top:226px" width="17" height="11" viewBox="0 0 17 11"><g transform="translate(1,1)" stroke="#fff" fill="none"><path d="M.5 5.500L7.500 1.500v2.500h8v3h-8v2.500z" stroke-width="1"/></g><g stroke="#848284" fill="none"><path d="M.5 5.500L7.500 1.500v2.500h8v3h-8v2.500z" stroke-width="1"/></g></svg>
<svg style="left:435px;top:226px" width="17" height="11" viewBox="0 0 17 11"><g transform="translate(1,1)" stroke="#fff" fill="none"><path d="M15.500 5.500L8.500 1.500v2.500h-8v3h8v2.500z" stroke-width="1"/></g><g stroke="#848284" fill="none"><path d="M15.500 5.500L8.500 1.500v2.500h-8v3h8v2.500z" stroke-width="1"/></g></svg>
<svg style="left:480px;top:223px" width="17" height="16" viewBox="0 0 17 16"><g transform="translate(1,1)" stroke="#fff" fill="none"><path d="M1.500 1l14 7-14 7 5-7z M15.500 8h-9" stroke-width="1"/></g><g stroke="#848284" fill="none"><path d="M1.500 1l14 7-14 7 5-7z M15.500 8h-9" stroke-width="1"/></g></svg>
<svg style="left:534px;top:223px" width="18" height="17" viewBox="0 0 18 17"><path d="M1.500 1.500l4 3.500M16.500 1.500l-4 3.500M0 9h4M14 9h4M1.500 16l3.500-3M16.500 16l-3.500-3M9 0v3M9 14.500v2.500" stroke="#f4f040" stroke-width="1.800"/><path d="M4.500 3h5.500l3.500 3.500v8h-9z" fill="#fff" stroke="#000" stroke-width="1.400"/><path d="M10 3v3.500h3.500" fill="none" stroke="#000" stroke-width="1.200"/></svg>
<svg style="left:582px;top:222px" width="17" height="17" viewBox="0 0 17 17"><path d="M7.500 1.500h5.500l3 3v11.500h-8.500z" fill="#fff" stroke="#000" stroke-width="1.300"/><path d="M13 1.500v3h3" fill="none" stroke="#000" stroke-width="1"/><path d="M10 4h2M12 7.500h2.500M10 10.500h1.500M13 10.500h1.500M10.500 13.500h1.500M13 13.500h1.500" stroke="#000" stroke-width="1"/><path d="M2.500 7.500l3-1.500 4 .5 1.500 2-2.500.5 2 1-1.500 1.500 1 1-1.500 1.500-5 .5-1.500-1.500z" fill="#f4ee5a" stroke="#000" stroke-width="1"/><path d="M6 9.500h3M6.500 11.500h3M6 13h2.500" stroke="#000" stroke-width=".8"/><rect x=".5" y="7" width="2" height="7.500" fill="#38c8d8" stroke="#000" stroke-width=".7"/><path d="M3 1.500l10 10.500" stroke="#000" stroke-width="2"/><path d="M2.500 1l2 2" stroke="#d02020" stroke-width="1.500"/><path d="M4.500 3l7.500 8" stroke="#c8a020" stroke-width=".8"/></svg>
<svg style="left:632px;top:223px" width="17" height="16" viewBox="0 0 17 16"><g transform="translate(1,1)" stroke="#fff" fill="none"><path d="M1.500 1.500h13v13h-12l-1-1z M4.500 1.500v5h8v-5 M5.500 14.500v-4h6v4 M7 11.500v2" stroke-width="1"/></g><g stroke="#848284" fill="none"><path d="M1.500 1.500h13v13h-12l-1-1z M4.500 1.500v5h8v-5 M5.500 14.500v-4h6v4 M7 11.500v2" stroke-width="1"/></g></svg>
<svg style="left:680px;top:226px" width="14" height="12" viewBox="0 0 14 12"><g transform="translate(1,1)"><path d="M1 1l4.500 4.500L1 10M13 1L8.500 5.500 13 10M4 .5l3 3 3-3M4 10.500l3-3 3 3" stroke="#fff" stroke-width="2.200" fill="none"/></g><path d="M1 1l4.500 4.500L1 10M13 1L8.500 5.500 13 10M4 .5l3 3 3-3M4 10.500l3-3 3 3" stroke="#848284" stroke-width="2.200" fill="none"/></svg>
<svg style="left:735px;top:223px" width="17" height="16" viewBox="0 0 17 16"><circle cx="8.500" cy="8.500" r="5.800" fill="none" stroke="#e81010" stroke-width="1.300"/><rect x="7.0" y="0.5" width="3" height="2.500" fill="#fff" stroke="#000" stroke-width="1"/><rect x="6.0" y="3.5" width="5" height="1.800" fill="#fff" stroke="#000" stroke-width="1"/><rect x="1.5" y="5.5" width="3" height="2.500" fill="#fff" stroke="#000" stroke-width="1"/><rect x="0.5" y="8.5" width="5" height="1.800" fill="#fff" stroke="#000" stroke-width="1"/><rect x="12.5" y="5.5" width="3" height="2.500" fill="#fff" stroke="#000" stroke-width="1"/><rect x="11.5" y="8.5" width="5" height="1.800" fill="#fff" stroke="#000" stroke-width="1"/><rect x="2.5" y="10.5" width="3" height="2.500" fill="#fff" stroke="#000" stroke-width="1"/><rect x="1.5" y="13.5" width="5" height="1.800" fill="#fff" stroke="#000" stroke-width="1"/><rect x="11.5" y="10.5" width="3" height="2.500" fill="#fff" stroke="#000" stroke-width="1"/><rect x="10.5" y="13.5" width="5" height="1.800" fill="#fff" stroke="#000" stroke-width="1"/></svg>
<svg style="left:784px;top:223px" width="13" height="16" viewBox="0 0 13 16"><path d="M4.500 1.500h4M1 3.500h11" stroke="#000" stroke-width="1.600" fill="none"/><path d="M2 5h9l-.7 10.500H2.700z" fill="#000"/><path d="M4.500 6.500v8M6.500 6.500v8M8.500 6.500v8" stroke="#d6d3ce" stroke-width=".9"/></svg>
<div class="t dis" style="left:334px;top:244px;;transform:scaleX(0.795)">Primeiro</div>
<div class="t dis" style="left:380px;top:244px;;transform:scaleX(0.822)">Anterior</div>
<div class="t dis" style="left:424px;top:244px;;transform:scaleX(0.807)">Próximo</div>
<div class="t dis" style="left:470px;top:244px;;transform:scaleX(0.807)">Próximo</div>
<div class="t " style="left:530px;top:244px;;transform:scaleX(0.857)">Novo</div>
<div class="t " style="left:574px;top:244px;;transform:scaleX(0.842)">Alterar</div>
<div class="t dis" style="left:626px;top:244px;;transform:scaleX(0.838)">Gravar</div>
<div class="t dis" style="left:666px;top:244px;;transform:scaleX(0.839)">Cancelar</div>
<div class="t " style="left:724px;top:244px;;transform:scaleX(0.822)">Atualizar</div>
<div class="t " style="left:774px;top:244px;;transform:scaleX(0.868)">Apagar</div>
<div class="t " style="left:333px;top:274px;;transform:scaleX(0.848)">Id.Seguro</div>
<div class="ed " style="left:332px;top:286px;width:70px;height:21px;"></div>
<div class="a" style="left:335px;top:289px;width:6px;height:13px;background:#08246b;"></div>
<div class="t " style="left:335px;top:291px;color:#fff">1</div>
<div class="t " style="left:417px;top:274px;;transform:scaleX(0.871)">Data</div>
<div class="ed " style="left:408px;top:286px;width:102px;height:20px;padding:4px 0 0 3px;letter-spacing:.3px"><span class="s">29/08/2025</span></div>
<div class="btn" style="left:488px;top:288px;width:20px;height:17px"><div class="a" style="left:4px;top:2px;width:12px;height:12px;background:#fff;border-right:1px solid #10106b;border-bottom:1px solid #10106b;font:bold 9px 'Liberation Sans',sans-serif;line-height:10px;text-align:center;letter-spacing:-.3px;color:#000">15</div></div>
<div class="t " style="left:519px;top:274px;;transform:scaleX(0.854)">Apólice</div>
<div class="ed " style="left:519px;top:286px;width:95px;height:21px;"><span class="s">54545</span></div>
<div class="t " style="left:628px;top:274px;;transform:scaleX(0.842)">Seguradora</div>
<div class="ed " style="left:628px;top:286px;width:121px;height:21px;"><span class="s">ITAU</span></div>
<div class="t " style="left:756px;top:274px;;transform:scaleX(0.814)">Corretora</div>
<div class="ed " style="left:756px;top:286px;width:121px;height:21px;"><span class="s">ZE</span></div>
<div class="t " style="left:884px;top:274px;;transform:scaleX(0.843)">Fone Seguradora</div>
<div class="ed " style="left:884px;top:286px;width:87px;height:21px;"><span class="s">555</span></div>
<div class="t " style="left:978px;top:274px;;transform:scaleX(0.826)">Fone Corretora</div>
<div class="ed " style="left:978px;top:286px;width:129px;height:21px;"><span class="s">555</span></div>
<div class="t " style="left:340px;top:314px;;transform:scaleX(0.873)">Vencimento</div>
<div class="ed " style="left:332px;top:326px;width:94px;height:20px;padding:4px 0 0 3px;letter-spacing:.3px"><span class="s">29/08/2026</span></div>
<div class="btn" style="left:404px;top:328px;width:20px;height:17px"><div class="a" style="left:4px;top:2px;width:12px;height:12px;background:#fff;border-right:1px solid #10106b;border-bottom:1px solid #10106b;font:bold 9px 'Liberation Sans',sans-serif;line-height:10px;text-align:center;letter-spacing:-.3px;color:#000">15</div></div>
<div class="t " style="left:431px;top:314px;;transform:scaleX(0.850)">Em Nome de</div>
<div class="ed " style="left:431px;top:326px;width:217px;height:21px;"></div>
<div class="t " style="left:658px;top:314px;;transform:scaleX(0.827)">Valor Prêmio</div>
<div class="ed " style="left:658px;top:326px;width:70px;height:21px;"></div>
<div class="t " style="left:736px;top:314px;;transform:scaleX(0.837)">Nº Parcelas</div>
<div class="ed " style="left:735px;top:326px;width:57px;height:21px;"></div>
<div class="t " style="left:800px;top:314px;;transform:scaleX(0.849)">Valor Segurado</div>
<div class="ed " style="left:800px;top:326px;width:74px;height:21px;"></div>
<div class="t " style="left:883px;top:314px;;transform:scaleX(0.851)">% Tab. Fipe</div>
<div class="ed " style="left:880px;top:326px;width:73px;height:21px;"></div>
<div class="t " style="left:958px;top:314px;;transform:scaleX(0.851)">Valor Franquia</div>
<div class="ed " style="left:958px;top:326px;width:73px;height:21px;"></div>
<div class="t " style="left:1039px;top:314px;;transform:scaleX(0.848)">Tipo Franquia</div>
<div class="ed " style="left:1036px;top:326px;width:70px;height:21px;"></div>
<div class="t " style="left:333px;top:352px;;transform:scaleX(0.852)">Valor Danos Materiais</div>
<div class="ed " style="left:332px;top:364px;width:108px;height:21px;"></div>
<div class="t " style="left:454px;top:352px;;transform:scaleX(0.844)">Valor Danos Corporais</div>
<div class="ed " style="left:452px;top:364px;width:109px;height:21px;"></div>
<div class="t " style="left:576px;top:352px;;transform:scaleX(0.845)">Valor Danos Morais</div>
<div class="ed " style="left:574px;top:364px;width:106px;height:21px;"></div>
<div class="t " style="left:695px;top:352px;;transform:scaleX(0.854)">Vlr.Morte p/ Passageiro</div>
<div class="ed " style="left:695px;top:364px;width:112px;height:21px;"></div>
<div class="t " style="left:822px;top:352px;;transform:scaleX(0.855)">Vlr.Invalidez p/ Passageiro</div>
<div class="ed " style="left:822px;top:364px;width:127px;height:21px;"></div>
<div class="t " style="left:333px;top:390px;;transform:scaleX(0.841)">Assistência 24 horas</div>
<div class="ed " style="left:332px;top:402px;width:122px;height:21px;"></div>
<div class="t " style="left:461px;top:390px;;transform:scaleX(0.850)">Assistência Médica</div>
<div class="ed " style="left:460px;top:402px;width:122px;height:21px;"></div>
<div class="t " style="left:591px;top:390px;;transform:scaleX(0.833)">Código</div>
<div class="ed " style="left:589px;top:402px;width:106px;height:21px;"></div>
<div class="t " style="left:333px;top:429px;;transform:scaleX(0.867)">Observações / Opcionais (Para-brisas/Faróis/Lanternas/Retrovisores...)</div>
<div class="ed " style="left:332px;top:441px;width:767px;height:21px;"></div>
<div class="ed " style="left:330px;top:469px;width:780px;height:231px;"></div>
<div class="a" style="left:332px;top:471px;width:776px;height:18px;background:#000;"></div>
<div class="hc" style="left:332px;top:471px;width:11px"><span class="s"></span></div>
<div class="hc" style="left:344px;top:471px;width:64px"><span class="s">incremento</span></div>
<div class="hc" style="left:409px;top:471px;width:64px"><span class="s">idbem</span></div>
<div class="hc" style="left:474px;top:471px;width:64px"><span class="s">data</span></div>
<div class="hc" style="left:539px;top:471px;width:184px"><span class="s">apolice</span></div>
<div class="hc" style="left:724px;top:471px;width:184px"><span class="s">seguradora</span></div>
<div class="hc" style="left:909px;top:471px;width:184px"><span class="s">corretora</span></div>
<div class="hc" style="left:1094px;top:471px;width:14px"><span class="s">fon</span></div>
<div class="a" style="left:332px;top:489px;width:776px;height:17px;background:#08246b;"></div>
<div class="hc" style="left:332px;top:488px;width:12px;height:18px"><div class="a" style="left:3px;top:3px;border:6px solid transparent;border-left:7px solid #000;border-right:0"></div></div>
<div class="sc r" style="left:344px;top:489px;width:65px"><span class="s">1</span></div>
<div class="sc r" style="left:409px;top:489px;width:65px"><span class="s">1</span></div>
<div class="sc" style="left:474px;top:489px;width:65px"><span class="s">29/08/2025</span></div>
<div class="sc" style="left:539px;top:489px;width:185px"><span class="s">54545</span></div>
<div class="sc" style="left:724px;top:489px;width:185px"><span class="s">ITAU</span></div>
<div class="sc" style="left:909px;top:489px;width:185px"><span class="s">ZE</span></div>
<div class="sc" style="left:1094px;top:489px;width:14px"><span class="s">555</span></div>
<div class="sbar" style="left:332px;top:682px;width:776px"></div>
<div class="sbtn" style="left:332px;top:682px"><div class="a" style="left:4px;top:4px;border:4px solid transparent;border-right:4px solid #000;border-left:0"></div></div>
<div class="sbtn" style="left:348px;top:682px"></div>
<div class="sbtn" style="left:1092px;top:682px"><div class="a" style="left:6px;top:4px;border:4px solid transparent;border-left:4px solid #000;border-right:0"></div></div>
<div class="t " style="left:286px;top:797px;font:italic bold 16px 'Liberation Serif',serif;line-height:18px;height:18px;letter-spacing:-0.10px;transform:none">Agrícola Versão 229F</div>
<svg style="left:1425px;top:842px" width="14" height="14" viewBox="0 0 14 14"><path d="M13 1L1 13M13 5L5 13M13 9L9 13" stroke="#848284" stroke-width="1.400"/><path d="M13 2L2 13M13 6L6 13M13 10L10 13" stroke="#fff" stroke-width=".8"/></svg>
<div class="btn" style="left:2px;top:860px;width:59px;height:37px"></div>
<svg style="left:5px;top:870px" width="15" height="15" viewBox="0 0 15 15"><path d="M1 3c2-1.500 4-1.500 6 0l-1 5c-2-1.500-4-1.500-6 0z" fill="#e8502a"/><path d="M8 3.300c2 1.200 4 1.200 6 0l-1 5c-2 1.200-4 1.200-6 0z" fill="#6cb82e"/><path d="M-.2 9c2-1.500 4-1.500 6 0l-1 5c-2-1.500-4-1.500-6 0z" fill="#2a7ae0"/><path d="M6.800 9.300c2 1.200 4 1.200 6 0l-1 5c-2 1.200-4 1.200-6 0z" fill="#f4c020"/></svg>
<div class="t " style="left:21px;top:873px;font:bold 11.500px 'DejaVu Sans Condensed','Liberation Sans',sans-serif;color:#000;letter-spacing:-0.22px;transform:none">Iniciar</div>
<div class="a" style="left:68px;top:862px;width:1px;height:34px;background:#fff;"></div>
<div class="a" style="left:69px;top:862px;width:1px;height:34px;background:#848284;"></div>
<div class="btn" style="left:79px;top:860px;width:48px;height:37px"></div>
<svg style="left:86px;top:862px" width="34" height="34" viewBox="0 0 34 34"><path d="M17 17L2.710 8.750A16.500 16.500 0 0 1 31.290 8.750L17 8.750Z" fill="#e53b2e"/><path d="M17 17L31.290 8.750A16.500 16.500 0 0 1 17 33.500L9.500 21Z" fill="#fbc116"/><path d="M17 17L17 33.500A16.500 16.500 0 0 1 2.710 8.750L17 8.750Z" fill="#2da14c"/><path d="M17 8.750h14.290A16.500 16.500 0 0 1 17 33.500l7.300-12.300z" fill="#fbc116"/><path d="M2.710 8.750A16.500 16.500 0 0 1 31.290 8.750z" fill="#e53b2e"/><path d="M2.710 8.750l7.300 12.400L17 17l0-8.250z" fill="#e53b2e" opacity="0"/><circle cx="17" cy="17" r="8" fill="#fff"/><circle cx="17" cy="17" r="6.300" fill="#3b7ded"/></svg>
<svg style="left:140px;top:864px" width="29" height="30" viewBox="0 0 29 30"><path d="M1 2l10-2 5 2v20H1z" fill="#a8b0b8"/><path d="M1 2l10-2v22H1z" fill="#c8ced4"/><path d="M2 5h8M2 8h8M2 11h8M2 14h8" stroke="#6a7278" stroke-width="1.200"/><path d="M11 0l5 2v14h-5z" fill="#7a8288"/><rect x="5" y="17" width="23" height="12" rx="2" fill="#8a96a0"/><rect x="5" y="17" width="23" height="5" rx="2" fill="#aab4bc"/><path d="M12 17c0-5 9-5 9 0" fill="none" stroke="#5a646c" stroke-width="1.800"/><rect x="10" y="21" width="3" height="4" fill="#d8dee2"/><rect x="20" y="21" width="3" height="4" fill="#d8dee2"/></svg>
<svg style="left:190px;top:868px" width="28" height="23" viewBox="0 0 28 23"><path d="M5 0h23l-5 23H0z" fill="#2a7ac8"/><path d="M5.500 1h21l-2 9c-7-3-14-2-21 1z" fill="#5aa8e8"/><path d="M8 5l8 6-9 6" fill="none" stroke="#fff" stroke-width="2.400"/><path d="M14 18h7" stroke="#fff" stroke-width="2"/></svg>
<svg style="left:241px;top:863px" width="24" height="30" viewBox="0 0 24 30"><path d="M7 14L1 26l5-1 3 4 4-11z" fill="#e84818"/><path d="M17 14l6 12-5-1-3 4-4-11z" fill="#e84818"/><path d="M12 0l2.500 1.500 3-.3 1.200 2.700 2.700 1.300-.4 3 1.600 2.500-1.800 2.300-.1 3-2.900.8-1.700 2.500L12 18l-2.800 1.200-1.700-2.500-2.900-.8-.1-3L2.700 10.600l1.600-2.500-.4-3 2.700-1.300L7.800 1.200l3 .3z" fill="#f05020"/><circle cx="12" cy="9.500" r="5" fill="#d83810"/><circle cx="12" cy="9.500" r="3" fill="#e85830"/></svg>
<div class="btn" style="left:279px;top:860px;width:48px;height:37px"></div>
<svg style="left:288px;top:866px" width="32" height="30" viewBox="0 0 32 30"><path d="M1 5h10l2 3h9v18H1z" fill="#e8c860"/><path d="M2 4h8l2 2H2z" fill="#f4e4a0"/><path d="M9 9h9l2 3h11v15H9z" fill="#f8e08c"/><path d="M9 12h22v15H9z" fill="#fcecac"/><rect x="4" y="2.500" width="3.500" height="2" fill="#3aa03a"/><rect x="12" y="5.500" width="3.500" height="2" fill="#d04030"/><rect x="20" y="8" width="3.500" height="2" fill="#3a90d0"/><path d="M4 17h21l1 2v10h-6v-6H10v6H4V19z" fill="#58b4ec"/><path d="M4.500 17.500h20.500l.8 2H3.700z" fill="#b8e4fc"/><path d="M10 23h10v1.500H10z" fill="#3a8ad0"/></svg>
<div class="btn" style="left:329px;top:860px;width:48px;height:37px"></div>
<svg style="left:338px;top:864px" width="30" height="30" viewBox="0 0 30 30"><circle cx="15" cy="15" r="15" fill="#c4c4c4"/><path d="M0 15a15 15 0 0 1 30 0z" fill="#3e9a20"/><path d="M1.500 9a15 15 0 0 1 27 0c-8-3-19-3-27 0z" fill="#6cc83c"/><path d="M.3 17.500a15 15 0 0 0 29.400 0z" fill="#e4e4e4"/><path d="M4 24a15 15 0 0 0 22 0z" fill="#b4b4b4"/><ellipse cx="15" cy="14.500" rx="12" ry="8" fill="#fff"/><text x="15" y="20" text-anchor="middle" font-family="Liberation Sans,sans-serif" font-weight="bold" font-size="14.500" fill="#000" textLength="19" lengthAdjust="spacingAndGlyphs">HS</text></svg>
<div class="btn" style="left:379px;top:860px;width:48px;height:37px"></div>
<div class="a" style="left:418px;top:861px;width:1px;height:35px;background:#848284;"></div>
<div class="a" style="left:419px;top:861px;width:1px;height:35px;background:#fff;"></div>
<div class="a" style="left:421px;top:861px;width:1px;height:35px;background:#848284;"></div>
<div class="a" style="left:422px;top:861px;width:1px;height:35px;background:#fff;"></div>
<div class="a" style="left:424px;top:861px;width:1px;height:35px;background:#848284;"></div>
<svg style="left:383px;top:864px" width="32" height="31" viewBox="0 0 32 31"><path d="M8 1h16l6 6v23H8z" fill="#e8f0fc" stroke="#7a9cd0" stroke-width="1"/><path d="M24 1v6h6z" fill="#b8ccec"/><path d="M12 10h14M12 14h14M12 18h14M12 22h14M12 26h14M17 10v16M22 10v16" stroke="#7a9cd0" stroke-width="1"/><path d="M13 27v-4M16 27v-6M19 27v-3M22 27v-7" stroke="#4a78c0" stroke-width="1.500"/><rect x="1" y="5" width="14" height="12" fill="#e8f4e8" stroke="#3a8a3a" stroke-width="1"/><path d="M0 6c3-4 9-5 13-3" fill="none" stroke="#3a9a3a" stroke-width="1.600"/><text x="4" y="15" font-family="Liberation Sans,sans-serif" font-weight="bold" font-style="italic" font-size="11" fill="#1a7a2a">x</text></svg>
<div class="btn" style="left:429px;top:860px;width:48px;height:37px"></div>
<svg style="left:436px;top:862px" width="34" height="34" viewBox="0 0 34 34"><rect x="0" y="0" width="34" height="34" fill="#b80c0c"/><rect x="1" y="1" width="32" height="32" fill="none" stroke="#7a0606" stroke-width="2" stroke-dasharray="2 2"/><rect x="3" y="3" width="28" height="28" fill="#c01010"/><text x="7" y="25.500" font-family="Liberation Sans,sans-serif" font-weight="bold" font-style="italic" font-size="23" fill="#fff" textLength="23" lengthAdjust="spacingAndGlyphs">Fz</text></svg>
<div class="btn" style="left:479px;top:860px;width:48px;height:37px"></div>
<svg style="left:486px;top:865px" width="32" height="29" viewBox="0 0 32 29"><path d="M8 2l20 3-5 22-22-5z" fill="#7ac8d8"/><path d="M8 2l20 3-3 10c-8 0-16 2-22 6z" fill="#a8e0ec"/><path d="M28 5l2 1-5 22-2-1z" fill="#e8e8e8"/><path d="M1 22l22 5 2 1-22-4.500z" fill="#c8c8c8"/><path d="M9 1.500l19 3" stroke="#888" stroke-width="1.500" stroke-dasharray="1.500 1.500"/></svg>
<div class="btn" style="left:529px;top:860px;width:48px;height:37px"></div>
<svg style="left:540px;top:864px" width="24" height="29" viewBox="0 0 24 29"><rect x=".5" y=".5" width="23" height="28" rx="2" fill="#dceaf8" stroke="#6a9ad8"/><rect x="3" y="3" width="18" height="8" fill="#f4f8fc" stroke="#6a9ad8" stroke-width=".8"/><text x="15" y="10" font-family="Liberation Mono,monospace" font-size="8" fill="#3060b0">0</text><g fill="#6aa0e0"><rect x="3" y="13.500" width="3.500" height="3"/><rect x="8" y="13.500" width="3.500" height="3"/><rect x="13" y="13.500" width="3.500" height="3"/><rect x="3" y="18" width="3.500" height="3"/><rect x="8" y="18" width="3.500" height="3"/><rect x="13" y="18" width="3.500" height="3"/><rect x="3" y="22.500" width="3.500" height="3"/><rect x="8" y="22.500" width="3.500" height="3"/><rect x="13" y="22.500" width="3.500" height="3"/></g><rect x="18" y="13.500" width="3" height="7" fill="#6aa0e0"/><rect x="18" y="22" width="3" height="3.500" fill="#f0a020"/></svg>
<div class="btn" style="left:579px;top:860px;width:48px;height:37px"></div>
<svg style="left:591px;top:863px" width="28" height="32" viewBox="0 0 28 32"><path d="M1 1h13v4L9 27h3v3H1v-3h3L9 6H1z" fill="#e0a010" stroke="#a06800" stroke-width=".6"/><path d="M2 2h11v2H2z" fill="#f8d040"/><circle cx="19" cy="19" r="7.500" fill="#1a8a5a"/><path d="M14 15c3 0 4 2 3 4s2 3 1 6M21 12c1 3 4 3 5 6" stroke="#3a70d0" stroke-width="2.200" fill="none"/><circle cx="19" cy="19" r="7.500" fill="none" stroke="#0a5a8a" stroke-width=".8"/></svg>
<div class="a" style="left:629px;top:860px;width:48px;height:37px;background:#fff;box-shadow:inset 1px 1px #424142,inset -1px -1px #fff,inset 2px 2px #848284"></div>
<svg style="left:637px;top:864px" width="30" height="30" viewBox="0 0 30 30"><circle cx="15" cy="15" r="15" fill="#1450a8"/><circle cx="15" cy="15" r="12.500" fill="none" stroke="#c8dcf8" stroke-width="1.600"/><circle cx="15" cy="15" r="10" fill="#2a70d0"/><path d="M22 10.500a8.200 8.200 0 1 0 0 9l-3.600-2a4.200 4.200 0 1 1 0-5z" fill="#fff"/><path d="M14 12h5v6h-5z" fill="#2a70d0" opacity=".0"/></svg>
<div class="a" style="left:1194px;top:862px;width:1px;height:34px;background:#848284;"></div>
<div class="a" style="left:1195px;top:862px;width:1px;height:34px;background:#fff;"></div>
<div class="t " style="left:1206px;top:871px;font:12px 'Liberation Sans',sans-serif;letter-spacing:-1.17px;transform:none">PT</div>
<svg style="left:1232px;top:869px" width="18" height="16" viewBox="0 0 18 16"><path d="M6 4c0-3 4-3 7-3" fill="none" stroke="#848284" stroke-width="1"/><rect x=".5" y="5.500" width="17" height="10" rx="1.500" fill="#e4e4e4" stroke="#949494"/><path d="M3 8h12M3 10.500h12M5 13h8" stroke="#8a8a8a" stroke-width="1.200" stroke-dasharray="1.500 1"/></svg>
<div class="a" style="left:1256px;top:860px;width:182px;height:37px;box-shadow:inset 1px 1px #848284,inset -1px -1px #fff"></div>
<svg style="left:1261px;top:872px" width="8" height="10" viewBox="0 0 8 10"><path d="M.5 4.500L4 1l3.500 3.500M.5 9L4 5.500 7.500 9" fill="none" stroke="#000" stroke-width="1.700"/></svg>
<svg style="left:1277px;top:870px" width="19" height="17" viewBox="0 0 19 17"><path d="M2.500 1v16" stroke="#5a5a5a" stroke-width="1.600"/><path d="M3.500 2c4-1.500 6 2 13 1l-3 4 2 4c-6 1-8-2-12-1z" fill="#f0f0f0" stroke="#6a6a6a" stroke-width="1"/></svg>
<svg style="left:1303px;top:870px" width="17" height="17" viewBox="0 0 17 17"><rect x="5.500" y="3.500" width="11" height="10" fill="#c8c8c8" stroke="#5a5a5a"/><rect x="7" y="5" width="8" height="7" fill="#e8e8e8"/><path d="M8 16h7" stroke="#5a5a5a" stroke-width="1.500"/><rect x="1.500" y="1.500" width="4" height="6" fill="#e8e8e8" stroke="#5a5a5a"/><path d="M3.500 0v2M3.500 7v7h3" stroke="#5a5a5a" stroke-width="1.200" fill="none"/></svg>
<svg style="left:1327px;top:871px" width="17" height="17" viewBox="0 0 17 17"><path d="M1 5h3l4-4v13l-4-4H1z" fill="#e8e8e8" stroke="#6a6a6a" stroke-width="1"/><circle cx="11.500" cy="11" r="5" fill="#e01818"/><path d="M9.500 9l4 4M13.500 9l-4 4" stroke="#fff" stroke-width="1.600"/></svg>
<div class="t " style="left:1370px;top:865px;font:12px 'Liberation Sans',sans-serif;letter-spacing:-0.41px;transform:none">15:18</div>
<div class="t " style="left:1357px;top:881px;font:12px 'Liberation Sans',sans-serif;letter-spacing:-0.51px;transform:none">29/08/2025</div>
<svg style="left:1420px;top:873px" width="15" height="13" viewBox="0 0 15 13"><rect x=".5" y=".5" width="14" height="10" fill="#2a68c8" stroke="#9ab8e8"/><path d="M1 1h13v4c-5 0-9 1-13 4z" fill="#5a98e8"/><rect x="2" y="8" width="3" height="2" fill="#6ac83c"/><rect x="0" y="11.500" width="15" height="1.500" fill="#3a5a9a"/></svg>
</div>
</body></html>
